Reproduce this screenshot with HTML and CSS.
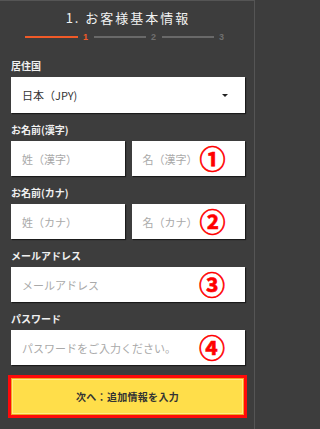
FILE: index.html
```
<!DOCTYPE html>
<html lang="ja">
<head>
<meta charset="utf-8">
<link rel="stylesheet" href="styles.css">
</head>
<body>
<div class="page">
  <header class="head">
    <h1 class="title">1. お客様基本情報</h1>
    <div class="steps">
      <span class="line on"></span><span class="num on">1</span>
      <span class="line"></span><span class="num">2</span>
      <span class="line"></span><span class="num">3</span>
    </div>
  </header>

  <form class="form">
    <div class="field">
      <label class="lbl">居住国</label>
      <div class="select"><span>日本（JPY)</span><span class="caret"></span></div>
    </div>

    <div class="field">
      <label class="lbl">お名前(漢字)</label>
      <div class="row">
        <div class="input">姓（漢字）</div>
        <div class="input">名（漢字）<span class="mark">①</span></div>
      </div>
    </div>

    <div class="field">
      <label class="lbl">お名前(カナ)</label>
      <div class="row">
        <div class="input">姓（カナ）</div>
        <div class="input">名（カナ）<span class="mark">②</span></div>
      </div>
    </div>

    <div class="field">
      <label class="lbl">メールアドレス</label>
      <div class="input wide">メールアドレス<span class="mark">③</span></div>
    </div>

    <div class="field">
      <label class="lbl">パスワード</label>
      <div class="input wide">パスワードをご入力ください。<span class="mark">④</span></div>
    </div>

    <div class="btn">次へ：追加情報を入力</div>
  </form>
</div>
</body>
</html>
```
FILE: styles.css
```
html, body {
  margin: 0;
  padding: 0;
}
body {
  background: #3d3d3d;
  font-family: "Noto Sans CJK JP", "Noto Sans", sans-serif;
  overflow: hidden;
}
.page {
  width: 255px;
  height: 429px;
  box-sizing: border-box;
  border-top: 1px solid #555;
  border-right: 1px solid #555;
}
.head {
  padding-top: 9px;
}
.title {
  margin: 0;
  font-size: 13px;
  line-height: 15px;
  font-weight: 400;
  color: #f2f2f2;
  text-align: center;
  letter-spacing: 2px;
  padding-left: 2px;
}
.steps {
  display: flex;
  align-items: center;
  margin-top: 7px;
  padding-left: 25px;
  height: 10px;
}
.line {
  width: 52px;
  height: 2px;
  background: #696969;
  margin-right: 5px;
}
.line.on {
  width: 53px;
  background: #f05a28;
}
.num {
  font-family: "Liberation Sans", sans-serif;
  font-size: 9px;
  font-weight: 700;
  line-height: 10px;
  color: #6f6f6f;
  margin-right: 6px;
}
.num.on {
  color: #f05a28;
}
.form {
  padding: 0 9px 0 11px;
  margin-top: 17px;
}
.field {
  margin-bottom: 10px;
}
.lbl {
  display: block;
  font-size: 10px;
  line-height: 14px;
  font-weight: 700;
  color: #f0f0f0;
  margin-bottom: 4px;
}
.select, .input {
  height: 35px;
  background: #fff;
  box-shadow: 1px 1px 1px rgba(0, 0, 0, 0.55);
  display: flex;
  align-items: center;
  box-sizing: border-box;
  padding-left: 11px;
  position: relative;
}
.select {
  height: 36px;
  justify-content: space-between;
  padding-right: 17px;
  font-size: 11px;
  color: #333;
}
.caret {
  width: 0;
  height: 0;
  border-left: 3px solid transparent;
  border-right: 3px solid transparent;
  border-top: 3px solid #222;
}
.row {
  display: flex;
  gap: 7px;
}
.row .input {
  flex: 1;
}
.input {
  font-size: 11px;
  color: #a9a9a9;
}
.mark {
  position: absolute;
  left: 68px;
  top: 50%;
  transform: translateY(-52%);
  font-size: 26px;
  line-height: 26px;
  font-weight: 700;
  color: #ff0000;
  -webkit-text-stroke: 0.6px #ff0000;
}
.wide .mark {
  left: 188px;
}
.btn {
  margin: 4px -2px 0 -3px;
  height: 43px;
  box-sizing: border-box;
  border: 3px solid #ff0a0a;
  background: #ffde4a;
  box-shadow: inset 0 0 0 1px #f5a623, inset 0 0 0 2px #ffe98a;
  display: flex;
  align-items: center;
  justify-content: center;
  font-size: 10px;
  font-weight: 700;
  color: #333;
  letter-spacing: 0.3px;
}
```
